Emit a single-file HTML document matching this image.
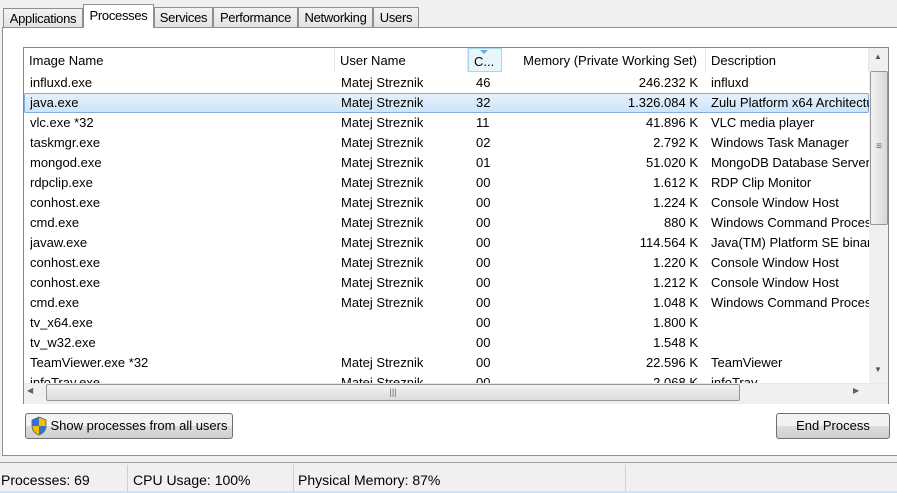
<html><head><style>
body{margin:0;width:897px;height:493px;background:#f0f0f0;font:13px "Liberation Sans",sans-serif;color:#000;position:relative;overflow:hidden}
.a{position:absolute}
.tab{position:absolute;top:7px;height:20px;border:1px solid #8e8f8f;border-bottom:none;background:linear-gradient(#f2f2f2,#e3e3e3);line-height:19px;text-align:center;box-sizing:border-box;white-space:nowrap;letter-spacing:-0.3px}
.row{position:absolute;left:25px;width:844px;height:20px;line-height:20px;overflow:hidden}
.row span{position:absolute;top:0;white-space:nowrap;overflow:hidden}
.hd{position:absolute;top:48px;height:24px;line-height:26px;border-right:1px solid #e5e5e5;box-sizing:border-box;padding-left:5px;white-space:nowrap}
.btn{position:absolute;border:1px solid #707070;border-radius:3px;background:linear-gradient(#f2f2f2 50%,#dddddd 50%,#cfcfcf);box-sizing:border-box;text-align:center;line-height:24px}
</style></head><body>
<div class="a" style="left:2px;top:27px;width:897px;height:429px;background:#fff;border:1px solid #8e8f8f;box-sizing:border-box"></div>
<div class="tab" style="left:3px;width:80px;top:8px;height:19px">Applications</div>
<div class="tab" style="left:83px;width:71px;top:4px;height:24px;background:#fff;line-height:22px">Processes</div>
<div class="tab" style="left:154px;width:59px">Services</div>
<div class="tab" style="left:213px;width:85px">Performance</div>
<div class="tab" style="left:298px;width:75px">Networking</div>
<div class="tab" style="left:373px;width:46px">Users</div>
<div class="a" style="left:23px;top:47px;width:866px;height:357px;border:1px solid #828790;box-sizing:border-box;background:#fff"></div>
<div class="hd" style="left:24px;width:311px">Image Name</div>
<div class="hd" style="left:335px;width:133px">User Name</div>
<div class="hd" style="left:468px;width:34px;background:#e9f5fc;border:1px solid #a8d8f0">C...</div>
<div class="a" style="left:480px;top:50px;width:0;height:0;border-left:4px solid transparent;border-right:4px solid transparent;border-top:4px solid #6fa8d0"></div>
<div class="hd" style="left:502px;width:204px;text-align:right;padding-right:8px">Memory (Private Working Set)</div>
<div class="hd" style="left:706px;width:163px">Description</div>
<div class="a" style="left:24px;top:93px;width:845px;height:20px;background:linear-gradient(#e5f1fc,#cde4f9);border:1px solid #84acdd;box-sizing:border-box;border-radius:2px"></div>
<div id="rows"></div>
<script>
var d=[["influxd.exe","Matej Streznik","46","246.232 K","influxd"],["java.exe","Matej Streznik","32","1.326.084 K","Zulu Platform x64 Architecture"],["vlc.exe *32","Matej Streznik","11","41.896 K","VLC media player"],["taskmgr.exe","Matej Streznik","02","2.792 K","Windows Task Manager"],["mongod.exe","Matej Streznik","01","51.020 K","MongoDB Database Server"],["rdpclip.exe","Matej Streznik","00","1.612 K","RDP Clip Monitor"],["conhost.exe","Matej Streznik","00","1.224 K","Console Window Host"],["cmd.exe","Matej Streznik","00","880 K","Windows Command Processor"],["javaw.exe","Matej Streznik","00","114.564 K","Java(TM) Platform SE binary"],["conhost.exe","Matej Streznik","00","1.220 K","Console Window Host"],["conhost.exe","Matej Streznik","00","1.212 K","Console Window Host"],["cmd.exe","Matej Streznik","00","1.048 K","Windows Command Processor"],["tv_x64.exe","","00","1.800 K",""],["tv_w32.exe","","00","1.548 K",""],["TeamViewer.exe *32","Matej Streznik","00","22.596 K","TeamViewer"],["infoTray.exe","Matej Streznik","00","2.068 K","infoTray"]];
var h="";d.forEach(function(r,i){h+='<div class="row" style="top:'+(73+i*20)+'px"><span style="left:5px">'+r[0]+'</span><span style="left:316px">'+r[1]+'</span><span style="left:451px">'+r[2]+'</span><span style="left:477px;width:196px;text-align:right">'+r[3]+'</span><span style="left:686px;width:158px">'+r[4]+'</span></div>'});
document.getElementById("rows").innerHTML=h;
</script>
<div class="a" style="left:24px;top:383px;width:864px;height:20px;background:#f0f0f0;border-top:1px solid #e8e8e8"></div>
<div class="a" style="left:27px;top:386px;color:#606060;font-size:8px">◀</div>
<div class="a" style="left:853px;top:386px;color:#606060;font-size:8px">▶</div>
<div class="a" style="left:46px;top:384px;width:694px;height:17px;border:1px solid #979797;border-radius:2px;background:linear-gradient(#f3f3f3,#dcdcdc);box-sizing:border-box;text-align:center;font-size:9px;line-height:15px;color:#666">|||</div>
<div class="a" style="left:869px;top:48px;width:19px;height:335px;background:#f0f0f0"></div>
<div class="a" style="left:874px;top:52px;color:#555;font-size:8px">▲</div>
<div class="a" style="left:874px;top:365px;color:#555;font-size:8px">▼</div>
<div class="a" style="left:870px;top:71px;width:18px;height:154px;border:1px solid #979797;border-radius:2px;background:linear-gradient(90deg,#f3f3f3,#d8d8d8);box-sizing:border-box;text-align:center;line-height:150px;color:#666;font-size:10px">≡</div>
<div class="btn" style="left:25px;top:413px;width:208px;height:26px;padding-left:20px;white-space:nowrap">Show processes from all users</div>
<svg class="a" style="left:30px;top:416px" width="18" height="20" viewBox="0 0 18 20"><path d="M9 1 L16 4 V10 C16 15 12 18 9 19 C6 18 2 15 2 10 V4 Z" fill="#f2c200" stroke="#555" stroke-width=".8"/><path d="M9 1 V10 H2 V4 Z M9 10 H16 C16 15 12 18 9 19 Z" fill="#3a6fcf"/></svg>
<div class="btn" style="left:776px;top:413px;width:114px;height:26px">End Process</div>
<div class="a" style="left:0;top:462px;width:897px;height:1px;background:#a0a0a0"></div>
<div class="a" style="left:0;top:465px;width:897px;height:28px;background:#f0f0f0"></div>
<div class="a" style="left:1px;top:472px;font-size:14px">Processes: 69</div>
<div class="a" style="left:127px;top:465px;width:1px;height:26px;background:#d0d0d0"></div>
<div class="a" style="left:133px;top:472px;font-size:14px">CPU Usage: 100%</div>
<div class="a" style="left:293px;top:465px;width:1px;height:26px;background:#d0d0d0"></div>
<div class="a" style="left:298px;top:472px;font-size:14px">Physical Memory: 87%</div>
<div class="a" style="left:625px;top:465px;width:1px;height:26px;background:#d0d0d0"></div>
<div class="a" style="left:0;top:491px;width:897px;height:2px;background:#cfe3f7"></div>
</body></html>
